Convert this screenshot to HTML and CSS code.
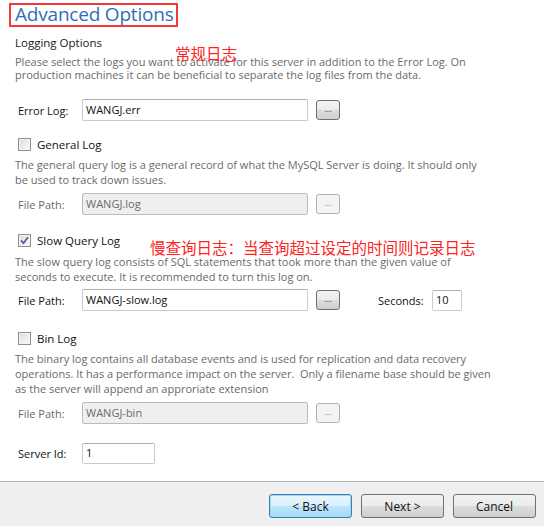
FILE: index.html
```html
<!DOCTYPE html>
<html>
<head>
<meta charset="utf-8">
<link rel="stylesheet" href="styles.css">
</head>
<body>
<div class="window">
  <div class="content">
    <div class="title-box"><h1 class="title">Advanced Options</h1></div>

    <div class="section-head">Logging Options</div>
    <p class="desc desc-first">Please select the logs you want to activate for this server in addition to the Error Log. On<br>production machines it can be beneficial to separate the log files from the data.</p>

    <div class="row row-error">
      <span class="label">Error Log:</span>
      <span class="input wide">WANGJ.err</span>
      <span class="dots">...</span>
    </div>

    <div class="check-row check-general">
      <span class="check"></span><span class="check-label">General Log</span>
    </div>
    <p class="desc">The general query log is a general record of what the MySQL Server is doing. It should only<br>be used to track down issues.</p>
    <div class="row row-path">
      <span class="label muted">File Path:</span>
      <span class="input wide disabled">WANGJ.log</span>
      <span class="dots disabled">...</span>
    </div>

    <div class="check-row check-slow">
      <span class="check checked"><svg width="9" height="9" viewBox="0 0 9 9"><path d="M1 4.5 L3.5 7.2 L8 1.2" fill="none" stroke="#4a5f97" stroke-width="1.8"/></svg></span><span class="check-label">Slow Query Log</span>
    </div>
    <p class="desc desc-slow">The slow query log consists of SQL statements that took more than the given value of<br>seconds to execute. It is recommended to turn this log on.</p>
    <div class="row row-path row-slow">
      <span class="label">File Path:</span>
      <span class="input wide">WANGJ-slow.log</span>
      <span class="dots">...</span>
      <span class="sec-label">Seconds:</span>
      <span class="input secs">10</span>
    </div>

    <div class="check-row check-bin">
      <span class="check"></span><span class="check-label">Bin Log</span>
    </div>
    <p class="desc">The binary log contains all database events and is used for replication and data recovery<br>operations. It has a performance impact on the server.&nbsp; Only a filename base should be given<br>as the server will append an approriate extension</p>
    <div class="row row-path">
      <span class="label muted">File Path:</span>
      <span class="input wide disabled">WANGJ-bin</span>
      <span class="dots disabled">...</span>
    </div>

    <div class="row row-server">
      <span class="label">Server Id:</span>
      <span class="input server">1</span>
    </div>

    <span class="note note-1">常规日志</span>
    <span class="note note-2">慢查询日志：当查询超过设定的时间则记录日志</span>
  </div>

  <div class="footer">
    <button class="btn focused">&lt; Back</button>
    <button class="btn">Next &gt;</button>
    <button class="btn">Cancel</button>
  </div>
</div>
</body>
</html>
```

FILE: styles.css
```css
* { box-sizing: border-box; }
html, body { margin: 0; padding: 0; background: #fff; }
body {
  width: 544px;
  height: 526px;
  overflow: hidden;
  font-family: "Open Sans", "Noto Sans CJK SC", sans-serif;
  font-size: 11px;
  color: #000;
}
.window {
  width: 544px;
  height: 526px;
  display: flex;
  flex-direction: column;
}
.content {
  position: relative;
  flex: 1;
  padding: 3px 0 0 15px;
}
.title-box {
  margin-left: -6px;
  width: 169px;
  height: 24px;
  border: 2px solid #f23a3a;
  padding-left: 4px;
}
.title {
  margin: 0;
  font-weight: 400;
  font-size: 19px;
  line-height: 18px;
  color: #2f6fb6;
  letter-spacing: -0.2px;
}
.section-head {
  margin-top: 8px;
  line-height: 15px;
  font-size: 11.5px;
  color: #1a1a1a;
}
.desc {
  margin: 0;
  width: 525px;
  white-space: nowrap;
  line-height: 15px;
  color: #6a6a6a;
}
.desc-first { margin-top: 5px; line-height: 13px; }
.row {
  display: flex;
  align-items: center;
  height: 22px;
  padding-left: 3px;
}
.row-error { margin-top: 18px; }
.label { width: 64px; color: #111; }
.label.muted { color: #6a6a6a; }
.input {
  height: 22px;
  border: 1px solid #c5cbd3;
  border-top-color: #aab0b8;
  border-radius: 2px;
  background: #fff;
  padding: 0 0 0 3px;
  line-height: 18px;
  color: #111;
  display: flex;
  align-items: center;
}
.input.wide { width: 226px; }
.input.disabled { background: #efefef; color: #6a6a6a; border-color: #b8bcc0; }
.input.secs { width: 30px; height: 21px; }
.input.server { width: 73px; height: 21px; }
.dots {
  margin-left: 8px;
  width: 24px;
  height: 20px;
  border: 1px solid #707070;
  border-radius: 3px;
  background: linear-gradient(#f2f2f2 0%, #ebebeb 50%, #dddddd 51%, #cfcfcf 100%);
  font-size: 9px;
  line-height: 16px;
  text-align: center;
  color: #333;
}
.dots.disabled { border-color: #adb2b5; background: #f4f4f4; color: #888; }
.sec-label { margin-left: 38px; width: 54px; color: #111; }
.check-row {
  display: flex;
  align-items: center;
  height: 15px;
  padding-left: 3px;
}
.check-general { margin-top: 16px; }
.check-slow { margin-top: 18px; }
.check-bin { margin-top: 20px; }
.check-row + .desc { margin-top: 5px; }
.check-row + .desc-slow { margin-top: 6px; }
.desc + .row-path { margin-top: 6px; }
.desc + .row-slow { margin-top: 5px; }
.check {
  width: 13px;
  height: 13px;
  border: 1px solid #8e8f8f;
  background: linear-gradient(135deg, #dcdcdc, #fbfbfb);
  box-shadow: inset 0 0 0 1px #f4f4f4;
  display: flex;
  align-items: center;
  justify-content: center;
}
.check-label { margin-left: 6px; font-size: 11.5px; color: #111; }
.row-server { margin-top: 18px; }
.note {
  position: absolute;
  color: #f22;
  font-family: "Noto Sans CJK SC", sans-serif;
  font-size: 15.5px;
  line-height: 18px;
  white-space: nowrap;
}
.note-1 { left: 175px; top: 44px; }
.note-2 { left: 150px; top: 238px; }
.footer {
  height: 45px;
  border-top: 1px solid #b4b4b4;
  background: #efefef;
  display: flex;
  justify-content: flex-end;
  align-items: flex-start;
  gap: 9px;
  padding: 12px 8px 0 0;
}
.btn {
  width: 83px;
  height: 24px;
  border: 1px solid #707070;
  border-radius: 3px;
  background: linear-gradient(#f2f2f2 0%, #ebebeb 50%, #dddddd 51%, #cfcfcf 100%);
  font-family: "Open Sans", sans-serif;
  font-size: 12px;
  color: #111;
  padding: 0;
}
.btn.focused {
  border-color: #3c7fb1;
  box-shadow: inset 0 0 0 1px #9fd5f5;
  background: linear-gradient(#eaf6fd 0%, #d9f0fc 50%, #bee6fd 51%, #a7d9f5 100%);
}
```
